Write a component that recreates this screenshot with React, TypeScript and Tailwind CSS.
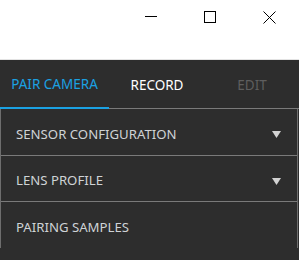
const rows = [
  { label: 'SENSOR CONFIGURATION', arrow: true, h: 'h-[47px]' },
  { label: 'LENS PROFILE', arrow: true, h: 'h-[46px]' },
  { label: 'PAIRING SAMPLES', arrow: false, h: 'h-[46px]' },
]

function Caret() {
  return (
    <svg width="9" height="7" viewBox="0 0 9 7" className="shrink-0">
      <path d="M0 0 H9 L4.5 7 Z" fill="#d2d2d2" />
    </svg>
  )
}

export default function App() {
  return (
    <div className="w-[299px] h-[260px] overflow-hidden bg-[#2d2d2d] font-['Noto_Sans',sans-serif]">
      {/* Title bar */}
      <div className="h-[60px] bg-white border-b border-[#e3e3e3] flex justify-end">
        <div className="w-[58px] h-[32px] flex items-center justify-center">
          <div className="w-[12px] h-px bg-black" />
        </div>
        <div className="w-[60px] h-[33px] flex items-center justify-center">
          <div className="w-[12px] h-[12px] border border-black" />
        </div>
        <div className="w-[59px] h-[34px] flex items-center justify-center">
          <svg width="13" height="13" viewBox="0 0 13 13">
            <path d="M0.5 0.5 L12.5 12.5 M12.5 0.5 L0.5 12.5" stroke="#000" strokeWidth="1" />
          </svg>
        </div>
      </div>

      {/* Tabs */}
      <div className="flex h-[49px] text-[13.5px]">
        <div className="w-[109px] flex items-center justify-center border-b-2 border-[#1ba1e2] text-[#1ba1e2] pt-[1px]">
          PAIR CAMERA
        </div>
        <div className="flex-1 flex border-b border-[#7a7a7a] items-center">
          <div className="w-[96px] text-center text-white pt-[2px]">RECORD</div>
          <div className="w-[94px] text-center text-[#5e5e5e] pt-[2px]">EDIT</div>
        </div>
      </div>

      {/* Panel */}
      <div className="w-[298px] border-l border-r border-[#6e6e6e] text-[13.2px] text-[#cfd3d6]">
        {rows.map((r) => (
          <div
            key={r.label}
            className={`${r.h} flex items-center justify-between pl-[15px] pr-[16px] pt-[5px] border-b border-[#7a7a7a] last:border-b-0`}
          >
            <span>{r.label}</span>
            {r.arrow && <Caret />}
          </div>
        ))}
      </div>
    </div>
  )
}
